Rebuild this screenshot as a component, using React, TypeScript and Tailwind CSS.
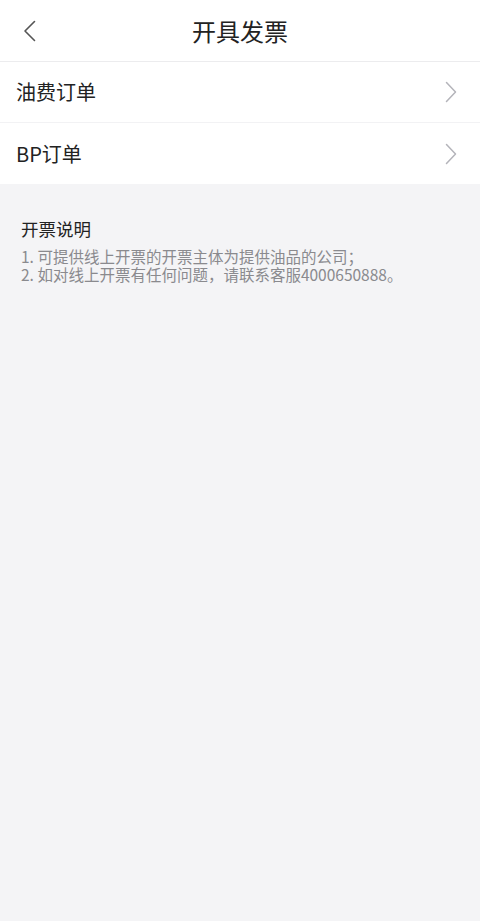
import React from "react";

const font = { fontFamily: '"Noto Sans CJK SC", Roboto, "Noto Sans", sans-serif' };

function Chevron() {
  return (
    <svg width="12" height="22" viewBox="0 0 12 22" fill="none">
      <path d="M1.5 1.5 L10.5 11 L1.5 20.5" stroke="#b4b4ba" strokeWidth="1.5" strokeLinecap="round" strokeLinejoin="round" />
    </svg>
  );
}

export default function App() {
  return (
    <div className="w-[480px] min-h-[921px] bg-[#f4f4f6] flex flex-col" style={font}>
      <div className="h-[62px] bg-white border-b border-[#ececee] flex items-center relative">
        <div className="pl-[23px] flex items-center">
          <svg width="14" height="22" viewBox="0 0 14 22" fill="none">
            <path d="M11.5 1.5 L2 11 L11.5 20.5" stroke="#555" strokeWidth="1.6" strokeLinecap="round" strokeLinejoin="round" />
          </svg>
        </div>
        <div className="absolute inset-0 flex items-center justify-center text-[24px] text-[#222] pointer-events-none">开具发票</div>
      </div>
      <div className="bg-white">
        <div className="h-[61px] flex items-center justify-between pl-[16px] pr-[23px] border-b border-[#f2f2f4]">
          <span className="text-[20px] text-[#222]">油费订单</span>
          <Chevron />
        </div>
        <div className="h-[61px] flex items-center justify-between pl-[16px] pr-[23px]">
          <span className="text-[20px] text-[#222]">BP订单</span>
          <Chevron />
        </div>
      </div>
      <div className="px-[21px] pt-[32px]">
        <div className="text-[17.5px] text-[#222] leading-[26px]">开票说明</div>
        <div className="mt-[5px] text-[15.5px] leading-[18px] text-[#8a8a8e]">
          <div>1. 可提供线上开票的开票主体为提供油品的公司；</div>
          <div>2. 如对线上开票有任何问题，请联系客服4000650888。</div>
        </div>
      </div>
    </div>
  );
}
